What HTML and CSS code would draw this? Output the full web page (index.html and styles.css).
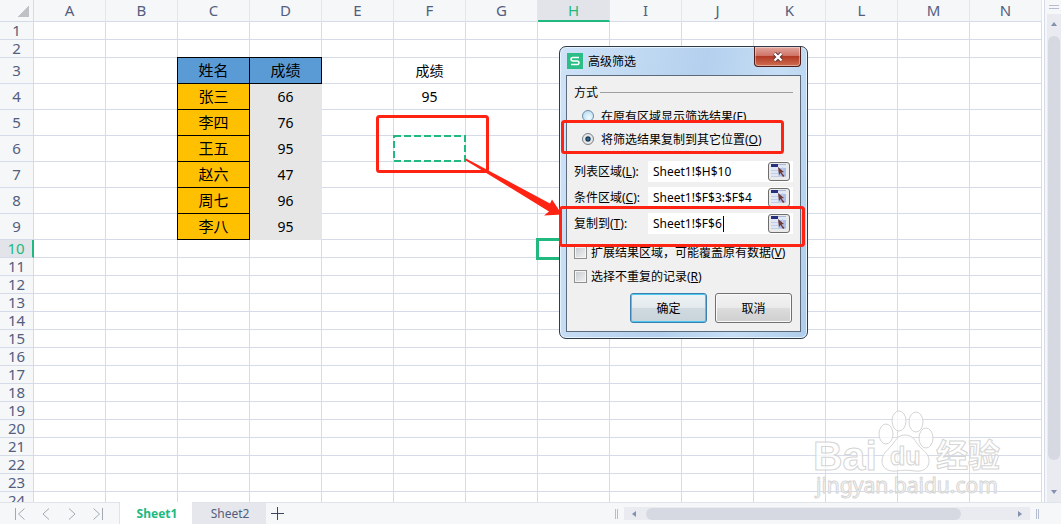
FILE: index.html
```html
<!DOCTYPE html>
<html lang="zh-CN">
<head>
<meta charset="UTF-8">
<meta name="viewport" content="width=device-width, initial-scale=1.0">
<title>Sheet1</title>
<link rel="stylesheet" href="styles.css">
</head>
<body>

<main class="workspace">
    <div class="sheet">
        <table class="grid">
            <thead id="grid-head"></thead>
            <tbody id="grid-body"></tbody>
        </table>

        <svg class="watermark" width="196" height="96" viewBox="0 0 196 96">
            <g class="wm-shape">
                <ellipse cx="76" cy="28" rx="7" ry="10"/>
                <ellipse cx="89" cy="15" rx="7" ry="10"/>
                <ellipse cx="106" cy="16" rx="7" ry="10"/>
                <ellipse cx="116" cy="32" rx="7" ry="10"/>
                <path d="M95 29c8 0 10 6 14 11 5 5 10 8 10 15 0 8-7 11-14 10-7-1-13-1-19 0-8 1-14-3-14-10 0-7 5-10 9-15 5-5 6-11 14-11z"/>
            </g>
            <g class="wm-text">
                <text class="wm-bai" x="3" y="64">Bai</text>
                <text class="wm-du" x="80" y="59">du</text>
                <text class="wm-cn" x="126" y="61">经验</text>
                <text class="wm-url" x="6" y="87">jingyan.baidu.com</text>
            </g>
        </svg>

        <form class="dialog" onsubmit="return false">
            <header class="dialog-title">
                <svg class="app-icon" width="16" height="16" viewBox="0 0 16 16">
                    <rect width="16" height="16" fill="#2dbd87"/>
                    <path d="M12 4.500H6q-2 0-2 1.700T6 8h4q2 0 2 1.800T10 11.500H4" fill="none" stroke="#fff" stroke-width="1.500"/>
                </svg>
                <span>高级筛选</span>
                <button type="button" class="close" aria-label="关闭">
                    <svg width="12" height="10" viewBox="0 0 12 10">
                        <path d="M2.500 1.500l7 7M9.500 1.500l-7 7" stroke="#5b3434" stroke-width="4.200"/>
                        <path d="M2.500 1.500l7 7M9.500 1.500l-7 7" stroke="#fff" stroke-width="2.400"/>
                    </svg>
                </button>
            </header>
            <div class="panel">
                <div class="legend">方式</div>
                <label class="radio-row"><input type="radio" name="mode"><span>在原有区域显示筛选结果(<u>F</u>)</span></label>
                <label class="radio-row"><input type="radio" name="mode" checked><span>将筛选结果复制到其它位置(<u>O</u>)</span></label>
                <div class="fields">
                    <div class="field">
                        <label for="list-range">列表区域(<u>L</u>):</label>
                        <div class="field-box">
                            <input type="text" id="list-range" value="Sheet1!$H$10">
                            <button type="button" class="picker" aria-label="选择列表区域"><svg width="16" height="14"><use href="#pick"/></svg></button>
                        </div>
                    </div>
                    <div class="field">
                        <label for="criteria-range">条件区域(<u>C</u>):</label>
                        <div class="field-box">
                            <input type="text" id="criteria-range" value="Sheet1!$F$3:$F$4">
                            <button type="button" class="picker" aria-label="选择条件区域"><svg width="16" height="14"><use href="#pick"/></svg></button>
                        </div>
                    </div>
                    <div class="field">
                        <label for="copy-to">复制到(<u>T</u>):</label>
                        <div class="field-box">
                            <input type="text" id="copy-to" value="Sheet1!$F$6">
                            <span class="caret"></span>
                            <button type="button" class="picker" aria-label="选择复制位置"><svg width="16" height="14"><use href="#pick"/></svg></button>
                        </div>
                    </div>
                </div>
                <label class="check-row"><input type="checkbox"><span>扩展结果区域，可能覆盖原有数据(<u>V</u>)</span></label>
                <label class="check-row"><input type="checkbox"><span>选择不重复的记录(<u>R</u>)</span></label>
                <div class="actions">
                    <button type="submit" class="btn btn-default">确定</button>
                    <button type="button" class="btn">取消</button>
                </div>
            </div>
        </form>

        <!-- marching ants on F6 and the red call-outs -->
        <svg class="marks" width="1044" height="502" viewBox="0 0 1044 502">
            <rect x="394" y="136" width="71" height="25" fill="none" stroke="#21b97f" stroke-width="2" stroke-dasharray="7 3"/>
            <g fill="none" stroke="#ff2314" stroke-width="3">
                <rect x="377.500" y="116.500" width="110" height="55" rx="2"/>
                <rect x="562.500" y="121.500" width="220" height="31" rx="2"/>
                <rect x="560.500" y="207.500" width="243" height="38" rx="2"/>
            </g>
            <path d="M465 160l1-1.500 84 45 2-4 10 15-18 1 5-4z" fill="#ff2314"/>
        </svg>
    </div>

    <aside class="vscroll">
        <div class="split-h"></div>
        <div class="vtrack">
            <svg width="6" height="4" viewBox="0 0 6 4"><path d="M0 4h6L3 0z" fill="#8391ae"/></svg>
            <div class="vthumb"></div>
            <svg width="6" height="4" viewBox="0 0 6 4"><path d="M0 0h6L3 4z" fill="#8391ae"/></svg>
        </div>
    </aside>
</main>

<footer class="bottom-bar">
    <nav class="tab-nav">
        <button aria-label="第一个"><svg width="12" height="12" viewBox="0 0 12 12"><path d="M1.500 0v12M10.500 .5L4.500 6l6 5.500"/></svg></button>
        <button aria-label="上一个"><svg width="12" height="12" viewBox="0 0 12 12"><path d="M9 .5L3 6l6 5.500"/></svg></button>
        <button aria-label="下一个"><svg width="12" height="12" viewBox="0 0 12 12"><path d="M3 .5L9 6l-6 5.500"/></svg></button>
        <button aria-label="最后一个"><svg width="12" height="12" viewBox="0 0 12 12"><path d="M10.500 0v12M1.500 .5l6 5.500-6 5.500"/></svg></button>
    </nav>
    <button class="tab tab-active">Sheet1</button>
    <button class="tab">Sheet2</button>
    <button class="tab-add" aria-label="新建工作表"><svg width="13" height="13" viewBox="0 0 13 13"><path d="M6.500 0v13M0 6.500h13"/></svg></button>
    <div class="hscroll">
        <div class="split-v"></div>
        <div class="htrack">
            <svg width="4" height="6" viewBox="0 0 4 6"><path d="M4 0v6L0 3z" fill="#8391ae"/></svg>
            <div class="hrail"><div class="hthumb"></div></div>
            <svg width="4" height="6" viewBox="0 0 4 6"><path d="M0 0v6l4-3z" fill="#8391ae"/></svg>
        </div>
        <div class="split-v"></div>
    </div>
</footer>

<svg class="defs">
    <symbol id="pick" viewBox="0 0 16 14">
        <rect x="0" y="0" width="15" height="13" fill="#dfe6f5"/>
        <rect x="7" y="4" width="8" height="9" fill="#a9c0ee"/>
        <path d="M0 6.500h7M0 9.500h7M7.500 3v10M11.500 3v10M0 12.500h15" stroke="#c3cee6"/>
        <rect x="0" y="0" width="7" height="3" fill="#26307c"/>
        <rect x="7" y="0" width="8" height="1" fill="#aab6d4"/>
        <path d="M7 3l6 5-2.500.5 3 3.500-1.500 1-2.500-4-1.500 2z" fill="#6e3a3a"/>
    </symbol>
</svg>

<script>
var columns = "ABCDEFGHIJKLMN".split("");
var rowCount = 24;
var activeColumn = "H";
var activeRow = 10;

var cells = {
    C3: "姓名", D3: "成绩", F3: "成绩", F4: "95",
    C4: "张三", D4: "66",
    C5: "李四", D5: "76",
    C6: "王五", D6: "95",
    C7: "赵六", D7: "47",
    C8: "周七", D8: "96",
    C9: "李八", D9: "95"
};

function cellClass(col, row) {
    if (col === activeColumn && row === activeRow) return "selected";
    if (row === 3 && (col === "C" || col === "D")) return "title-cell";
    if (row > 3 && row < 10 && col === "C") return "name-cell";
    if (row > 3 && row < 10 && col === "D") return "score-cell";
    return "";
}

var head = '<tr><th class="corner"></th>';
columns.forEach(function(col) {
    head += '<th class="col-head' + (col === activeColumn ? " active" : "") + '">' + col + "</th>";
});
document.getElementById("grid-head").innerHTML = head + "</tr>";

var body = "";
for (var row = 1; row <= rowCount; row++) {
    body += '<tr class="' + (row >= 3 && row <= 9 ? "tall" : "") + '">';
    body += '<th class="row-head' + (row === activeRow ? " active" : "") + '">' + row + "</th>";
    columns.forEach(function(col) {
        body += '<td class="' + cellClass(col, row) + '">' + (cells[col + row] || "") + "</td>";
    });
    body += "</tr>";
}
document.getElementById("grid-body").innerHTML = body;
</script>
</body>
</html>
```
FILE: styles.css
```css
* {
    box-sizing: border-box;
}
body {
    margin: 0;
    height: 100vh;
    display: flex;
    flex-direction: column;
    overflow: hidden;
    background: #f5f7f9;
    font-family: "Noto Sans", "Noto Sans CJK SC", sans-serif;
    font-size: 12px;
}
button {
    font: inherit;
    padding: 0;
    border: none;
    background: none;
}
svg {
    display: block;
}
.defs {
    position: absolute;
    width: 0;
    height: 0;
}
.workspace {
    flex: 1;
    min-height: 0;
    display: flex;
}
.sheet {
    position: relative;
    flex: 1;
    min-width: 0;
    overflow: hidden;
    background: #fff;
}

/* grid */
.grid {
    table-layout: fixed;
    width: 1042px;
    border-collapse: separate;
    border-spacing: 0;
}
.grid th, .grid td {
    padding: 0;
    height: 18px;
    line-height: 17px;
    text-align: center;
    font-weight: normal;
    border-right: 1px solid #d5dbe8;
    border-bottom: 1px solid #d5dbe8;
}
.grid td {
    font-size: 14px;
    color: #000;
}
.grid .tall th, .grid .tall td {
    height: 26px;
    line-height: 25px;
}
.grid th {
    background: #f5f7f9;
    color: #535e7f;
    font-size: 15px;
}
.grid .corner {
    width: 34px;
    background: linear-gradient(135deg, transparent 50%, #bfc1c4 50%) 18px 6px / 11px 11px no-repeat #f5f7f9;
}
.grid .col-head {
    width: 72px;
    height: 22px;
    line-height: 21px;
    border-right-color: #e2e6ee;
}
.grid .col-head.active {
    background: #e2e4e9;
    color: #21b97f;
    border-bottom: 2px solid #21b97f;
    line-height: 20px;
}
.grid .row-head.active {
    background: #e2e4e9;
    color: #21b97f;
    border-right: 2px solid #21b97f;
}
.grid .title-cell, .grid .name-cell {
    border-color: #000;
    font-size: 15px;
    box-shadow: -1px 0 #000;
}
.grid .title-cell {
    background: #5b9bd5;
    box-shadow: -1px 0 #000, 0 -1px #000, -1px -1px #000;
}
.grid .name-cell {
    background: #ffc000;
}
.grid .score-cell {
    background: #e6e6e6;
    border-color: #e6e6e6;
}
.grid .selected {
    outline: 3px solid #21b97f;
    outline-offset: -1px;
}

/* overlays */
.marks {
    position: absolute;
    left: 0;
    top: 0;
    pointer-events: none;
}
.watermark {
    position: absolute;
    right: 38px;
    bottom: 0;
}
.wm-shape, .wm-text {
    fill: #fff;
    fill-opacity: 0.7;
    stroke: #d5d5d5;
    stroke-width: 1;
}
.wm-bai {
    font: bold 41px "Liberation Sans", sans-serif;
}
.wm-du {
    font: bold 25px "Liberation Sans", sans-serif;
}
.wm-cn {
    font: bold 32px "Noto Sans CJK SC", sans-serif;
}
.wm-url {
    font: 21px "Noto Sans", sans-serif;
}

/* dialog */
.dialog {
    position: absolute;
    left: 559px;
    top: 46px;
    width: 249px;
    padding: 0 6px 6px;
    border: 1px solid #2f3b49;
    border-radius: 7px;
    background: linear-gradient(100deg, #cfe3f7, #b4d0ee 50%, #c6def5 75%, #aecdec);
    box-shadow: inset 0 0 0 1px #e6f2fd;
}
.dialog-title {
    display: flex;
    align-items: center;
    gap: 5px;
    height: 28px;
    padding-left: 1px;
}
.close {
    align-self: flex-start;
    margin-left: auto;
    width: 47px;
    height: 20px;
    display: flex;
    align-items: center;
    justify-content: center;
    border: 1px solid #4d1f1c;
    border-top: none;
    border-radius: 0 0 4px 4px;
    background: linear-gradient(#e2a79d, #cf7467 45%, #b23a25 50%, #cf6d50);
    box-shadow: inset 0 0 0 1px rgba(255, 255, 255, 0.4);
}
.panel {
    padding: 4px 7px 8px;
    border: 1px solid #5b6b7c;
    background: #f0f0f0;
    color: #000;
}
.legend {
    display: flex;
    align-items: center;
    gap: 2px;
    height: 24px;
}
.legend::after {
    content: "";
    flex: 1;
    height: 1px;
    background: #a0a0a0;
}
.radio-row, .check-row {
    display: flex;
    align-items: center;
    white-space: nowrap;
}
.radio-row {
    height: 23px;
    gap: 7px;
    padding-left: 8px;
}
.check-row {
    height: 24px;
    gap: 4px;
}
.radio-row input, .check-row input {
    appearance: none;
    margin: 0;
    border: 1px solid #8e8f8f;
}
.radio-row input {
    width: 12px;
    height: 12px;
    border-radius: 50%;
    border-color: #6f8ba3;
    background: radial-gradient(circle at 60% 65%, #f2fbff, #a9d6ee);
}
.radio-row input:checked {
    border-color: #7a7f85;
    background: radial-gradient(circle, #3e86b4 0, #12304c 30%, #e4e6e8 45%);
}
.check-row input {
    width: 13px;
    height: 13px;
    background: linear-gradient(135deg, #c6c9cf, #f3f3f3);
    box-shadow: inset 0 0 0 1px #f4f4f4;
}
.fields {
    margin: 8px 0 4px;
}
.field {
    display: flex;
    align-items: center;
    height: 26px;
}
.field label {
    width: 74px;
}
.field-box {
    position: relative;
    flex: 1;
    min-width: 0;
    display: flex;
    align-items: center;
    height: 21px;
    padding-right: 3px;
    background: #fff;
}
.field-box input {
    flex: 1;
    min-width: 0;
    height: 20px;
    padding: 0 0 0 5px;
    border: none;
    background: none;
    font: inherit;
    outline: none;
}
.caret {
    position: absolute;
    left: 75px;
    top: 3px;
    width: 1px;
    height: 16px;
    background: #000;
}
.picker {
    width: 22px;
    height: 19px;
    display: flex;
    align-items: center;
    justify-content: center;
    border: 1px solid #6d6d6d;
    border-radius: 3px;
    background: #eaeaea;
}
.actions {
    display: flex;
    justify-content: flex-end;
    gap: 8px;
    margin-top: 5px;
    padding-right: 1px;
}
.btn {
    width: 77px;
    height: 30px;
    border: 1px solid #707070;
    border-radius: 3px;
    background: linear-gradient(#f2f2f2, #ebebeb 48%, #dcdcdc 50%, #cfcfcf);
    box-shadow: inset 0 0 0 1px #fafafa;
}
.btn-default {
    border-color: #3c7fb1;
    background: linear-gradient(#eef2f4, #e4eaee 48%, #d0dae0 50%, #c8d3da);
    box-shadow: inset 0 0 0 1px #48c8ee;
}

/* scrollbars */
.vscroll {
    width: 17px;
    display: flex;
    flex-direction: column;
    padding-left: 2px;
    border-left: 1px solid #d5dbe8;
}
.split-h {
    height: 4px;
    margin: 5px 2px;
    border-top: 1px solid #b5bed1;
    border-bottom: 1px solid #b5bed1;
}
.vtrack {
    flex: 1;
    display: flex;
    flex-direction: column;
    align-items: center;
    gap: 10px;
    padding: 8px 0;
    background: #e9ebf0;
}
.vthumb {
    width: 12px;
    flex: 1;
    margin-bottom: 20px;
    border-radius: 6px;
    background: #d6d9e1;
}
.bottom-bar {
    display: flex;
    align-items: stretch;
    height: 22px;
    border-top: 1px solid #dfe3ea;
    background: #f5f7f9;
}
.tab-nav {
    display: flex;
    align-items: center;
    gap: 14px;
    width: 120px;
    padding-left: 14px;
    border-right: 1px solid #dfe3ea;
}
.tab-nav path {
    fill: none;
    stroke: #a3a8b3;
}
.tab {
    width: 74px;
    padding-left: 2px;
    background: #e5e7ec;
    color: #535e7f;
}
.tab-active {
    width: 72px;
    margin-top: -1px;
    background: #fff;
    color: #21b97f;
    font-weight: bold;
}
.tab-add {
    padding: 0 5px;
}
.tab-add path {
    stroke: #3d465c;
}
.hscroll {
    display: flex;
    align-items: center;
    gap: 6px;
    width: 42%;
    margin-left: auto;
    padding-right: 22px;
}
.split-v {
    width: 3px;
    height: 10px;
    border-left: 1px solid #b5bed1;
    border-right: 1px solid #b5bed1;
}
.htrack {
    flex: 1;
    display: flex;
    align-items: center;
    gap: 10px;
    height: 13px;
    padding: 0 8px;
    background: #e9ebf0;
}
.hrail {
    flex: 1;
}
.hthumb {
    width: 87%;
    height: 12px;
    border-radius: 6px;
    background: #d6d9e1;
}
```
